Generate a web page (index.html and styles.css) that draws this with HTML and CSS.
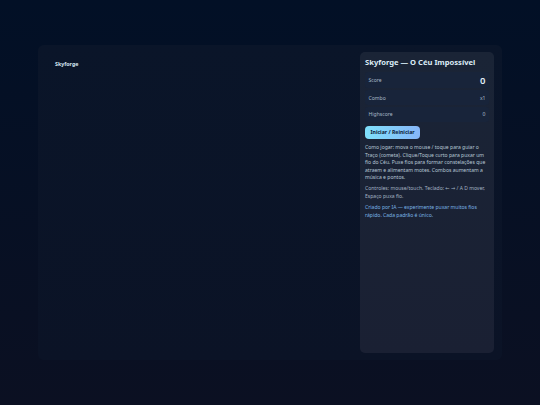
FILE: index.html
```html
<!DOCTYPE html>
<html lang="pt">
<head>
<meta charset="utf-8">
<title>Skyforge</title>
<link rel="stylesheet" href="styles.css">
</head>
<body>
<div class="app">
  <main class="stage">
    <div class="brand">Skyforge</div>
  </main>
  <aside class="panel">
    <h1 class="title">Skyforge — O Céu Impossível</h1>
    <div class="stat stat-score"><span class="label">Score</span><span class="score">0</span></div>
    <div class="stat"><span class="label">Combo</span><span class="value">x1</span></div>
    <div class="stat"><span class="label">Highscore</span><span class="value">0</span></div>
    <button class="start">Iniciar / Reiniciar</button>
    <p class="text">Como jogar: mova o mouse / toque para guiar o Traço (cometa). Clique/Toque curto para puxar um fio do Céu. Puxe fios para formar constelações que atraem e alimentam motes. Combos aumentam a música e pontos.</p>
    <p class="text muted">Controles: mouse/touch. Teclado: ← → / A D mover, Espaço puxa fio.</p>
    <p class="text accent">Criado por IA — experimente puxar muitos fios rápido. Cada padrão é único.</p>
  </aside>
</div>
</body>
</html>
```
FILE: styles.css
```css
* { box-sizing: border-box; }
html, body { height: 100%; }
body {
  margin: 0;
  height: 405px;
  overflow: hidden;
  background: linear-gradient(180deg, #021026 0%, #0b1022 100%);
  font-family: "Noto Sans", "DejaVu Sans", sans-serif;
  display: flex;
  align-items: flex-start;
  justify-content: center;
  padding-top: 45px;
}
.app {
  width: 464px;
  height: 315px;
  padding: 7px 8px;
  display: flex;
  gap: 8px;
  border-radius: 6px;
  background: linear-gradient(180deg, #0a1529 0%, #0b1326 100%);
}
.stage { flex: 1; padding: 5px 9px; }
.brand { font-size: 5.3px; font-weight: 700; line-height: 14px; color: #d8e6f2; }
.panel {
  width: 134px;
  padding: 5px;
  border-radius: 5px;
  background: linear-gradient(180deg, #1a2436 0%, #1a2033 100%);
  color: #c5d3e0;
}
.title { margin: 0 0 2px; font-size: 7.6px; line-height: 10px; font-weight: 700; color: #dcecf6; white-space: nowrap; }
.stat {
  height: 15px;
  margin-bottom: 1.5px;
  padding: 0 3.5px;
  display: flex;
  align-items: center;
  justify-content: space-between;
  border-radius: 3px;
  background: #18243a;
  font-size: 5.1px;
}
.stat-score { height: 16px; margin-top: 5px; margin-bottom: 2px; }
.label { color: #a9bac9; }
.value { color: #a9bac9; }
.score { font-size: 9.5px; font-weight: 600; color: #e2eef6; }
.start {
  display: block;
  margin: 4px 0 5.5px;
  padding: 0 5.5px;
  height: 13px;
  border: 0;
  border-radius: 4px;
  background: linear-gradient(90deg, #7fe0fb 0%, #86b6f8 100%);
  font-family: inherit;
  font-size: 5.2px;
  font-weight: 700;
  color: #0b2036;
}
.text { margin: 0 0 3.4px; font-size: 5.05px; line-height: 7.6px; color: #b8c8d6; }
.muted { color: #a3b3c2; }
.accent { color: #7ab4e4; }
```
